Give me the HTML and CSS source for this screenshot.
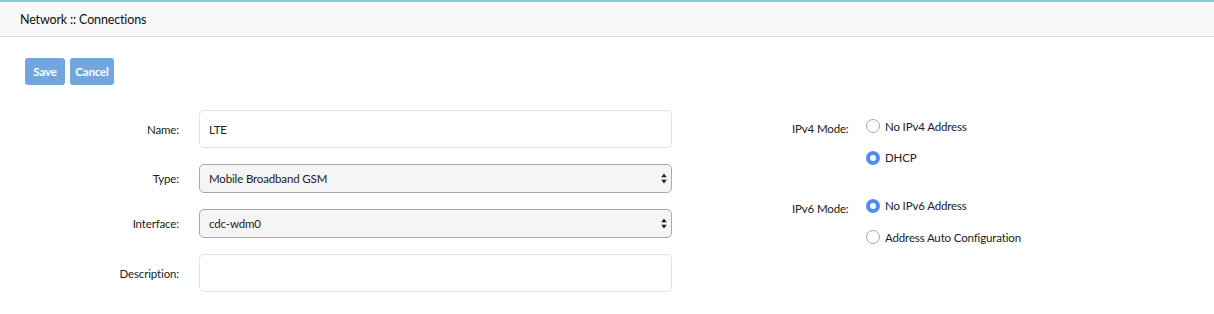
FILE: index.html
```html
<!DOCTYPE html>
<html>
<head>
<meta charset="utf-8">
<link rel="stylesheet" href="styles.css">
</head>
<body>
<header class="topbar">
  <h1 class="title">Network :: Connections</h1>
</header>
<main class="content">
  <div class="actions">
    <button class="btn btn-save">Save</button>
    <button class="btn btn-cancel">Cancel</button>
  </div>
  <div class="columns">
    <div class="form-left">
      <label class="label">Name:</label>
      <input class="field text" type="text" value="LTE">
      <label class="label">Type:</label>
      <div class="field select"><span>Mobile Broadband GSM</span>
        <svg class="caret" width="6" height="11" viewBox="0 0 6 11"><path d="M3 0.5L5.8 4.2H0.2Z M3 10.5L5.8 6.8H0.2Z" fill="#222"/></svg>
      </div>
      <label class="label">Interface:</label>
      <div class="field select"><span>cdc-wdm0</span>
        <svg class="caret" width="6" height="11" viewBox="0 0 6 11"><path d="M3 0.5L5.8 4.2H0.2Z M3 10.5L5.8 6.8H0.2Z" fill="#222"/></svg>
      </div>
      <label class="label">Description:</label>
      <input class="field text" type="text" value="">
    </div>
    <div class="form-right">
      <div class="group">
        <span class="rlabel">IPv4 Mode:</span>
        <div class="options">
          <div class="opt"><span class="radio"></span>No IPv4 Address</div>
          <div class="opt"><span class="radio on"></span>DHCP</div>
        </div>
      </div>
      <div class="group">
        <span class="rlabel">IPv6 Mode:</span>
        <div class="options">
          <div class="opt"><span class="radio on"></span>No IPv6 Address</div>
          <div class="opt"><span class="radio"></span>Address Auto Configuration</div>
        </div>
      </div>
    </div>
  </div>
</main>
</body>
</html>
```

FILE: styles.css
```css
* { box-sizing: border-box; }
html, body { margin: 0; padding: 0; background: #fff; }
body {
  font-family: "Lato", "Liberation Sans", sans-serif;
  font-size: 11.5px;
  letter-spacing: -0.15px;
  color: #222;
}
.topbar {
  height: 37px;
  border-top: 2px solid #7fcbd6;
  border-bottom: 1px solid #dcdcdc;
  background: #f8f8f8;
  display: flex;
  align-items: center;
  padding-left: 20px;
}
.title {
  margin: 0;
  font-size: 12.5px;
  letter-spacing: -0.15px;
  font-weight: 400;
  color: #111;
}
.content { padding: 21px 0 0 25px; }
.actions { display: flex; gap: 5px; }
.btn {
  height: 27px;
  padding: 0;
  border: none;
  border-radius: 3px;
  background: #73a6dd;
  color: #fff;
  font-family: inherit;
  font-size: 11.5px;
  letter-spacing: -0.15px;
  font-weight: 700;
}
.btn-save { width: 40px; }
.btn-cancel { width: 44px; }
.columns { display: flex; margin-top: 25px; }
.form-left {
  display: grid;
  grid-template-columns: 154px 473px;
  column-gap: 20px;
  row-gap: 16px;
  align-items: center;
}
.label { text-align: right; }
.field {
  width: 473px;
  border-radius: 5px;
  font-family: inherit;
  font-size: 11.5px;
  letter-spacing: -0.15px;
  color: #222;
}
.text {
  height: 38px;
  border: 1px solid #e3e3e3;
  background: #fff;
  padding: 0 9px;
  outline: none;
}
.select {
  height: 29px;
  border: 1px solid #a9a9a9;
  background: #f5f5f5;
  display: flex;
  align-items: center;
  justify-content: space-between;
  padding: 0 4px 0 9px;
}
.caret { display: block; }
.form-right {
  margin-left: 120px;
  margin-top: 9px;
  display: flex;
  flex-direction: column;
  gap: 34px;
}
.group { display: flex; }
.rlabel { width: 74px; padding-top: 3px; }
.options { display: flex; flex-direction: column; gap: 17.5px; }
.opt { display: flex; align-items: center; gap: 5px; height: 14px; }
.radio {
  width: 14px; height: 14px;
  border-radius: 50%;
  border: 1px solid #a8a8a8;
  background: #fff;
  display: inline-block;
}
.radio.on {
  border: 4.5px solid #4b8ff0;
  background: #fff;
}
```
